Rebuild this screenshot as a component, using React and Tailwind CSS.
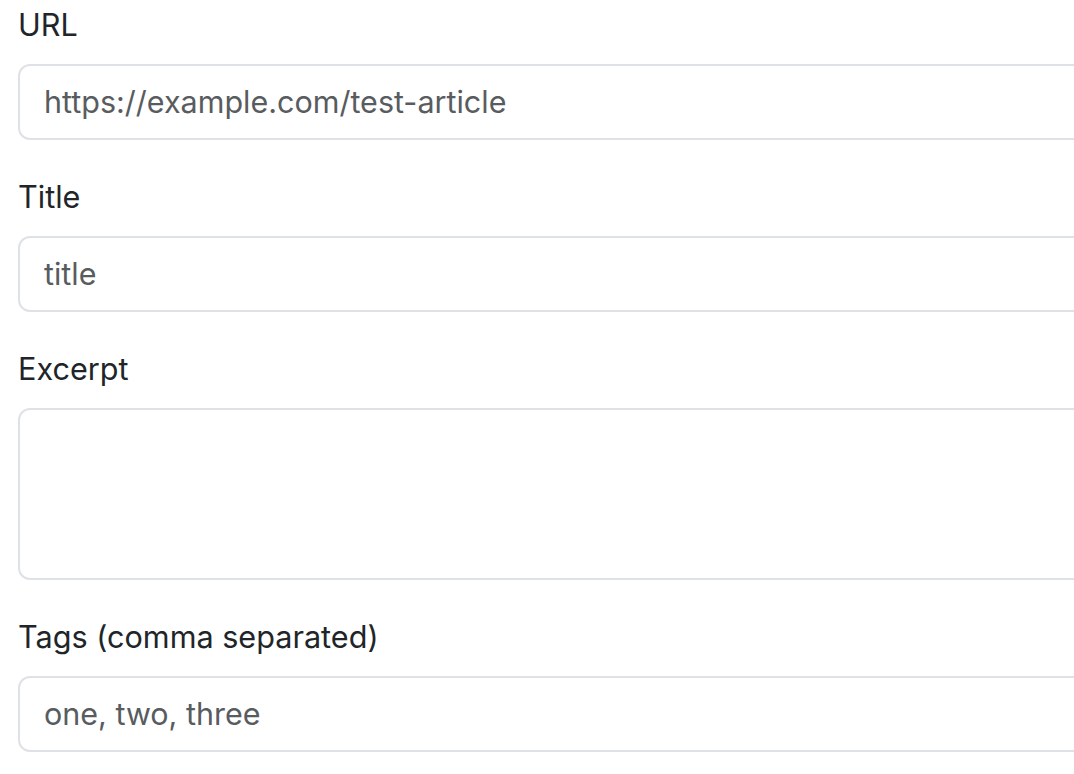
import React, { useState } from "react";

const inputCls =
  "block w-full bg-white border-2 border-[#dee2e6] rounded-[12px] px-[24px] py-[12px] text-[30.5px] leading-[48px] text-[#595c5f] placeholder:text-[#595c5f] focus:outline-none";

function Field({ label, children }) {
  return (
    <div className="mb-[32px]">
      <label className="block text-[30.6px] leading-[48px] text-[#212529] pt-[1px] mb-[15px]">
        {label}
      </label>
      {children}
    </div>
  );
}

export default function App() {
  const [url, setUrl] = useState("https://example.com/test-article");

  return (
    <div
      className="w-screen h-screen overflow-hidden bg-white"
      style={{ fontFamily: 'Inter, "Liberation Sans", Arial, sans-serif' }}
    >
      <form className="w-[1240px] pl-[18px]">
        <Field label="URL">
          <input
            className={inputCls}
            type="text"
            value={url}
            onChange={(e) => setUrl(e.target.value)}
          />
        </Field>
        <Field label="Title">
          <input className={inputCls} type="text" placeholder="title" />
        </Field>
        <Field label="Excerpt">
          <textarea className={inputCls + " resize-none"} rows={3} />
        </Field>
        <Field label="Tags (comma separated)">
          <input className={inputCls} type="text" placeholder="one, two, three" />
        </Field>
      </form>
    </div>
  );
}
